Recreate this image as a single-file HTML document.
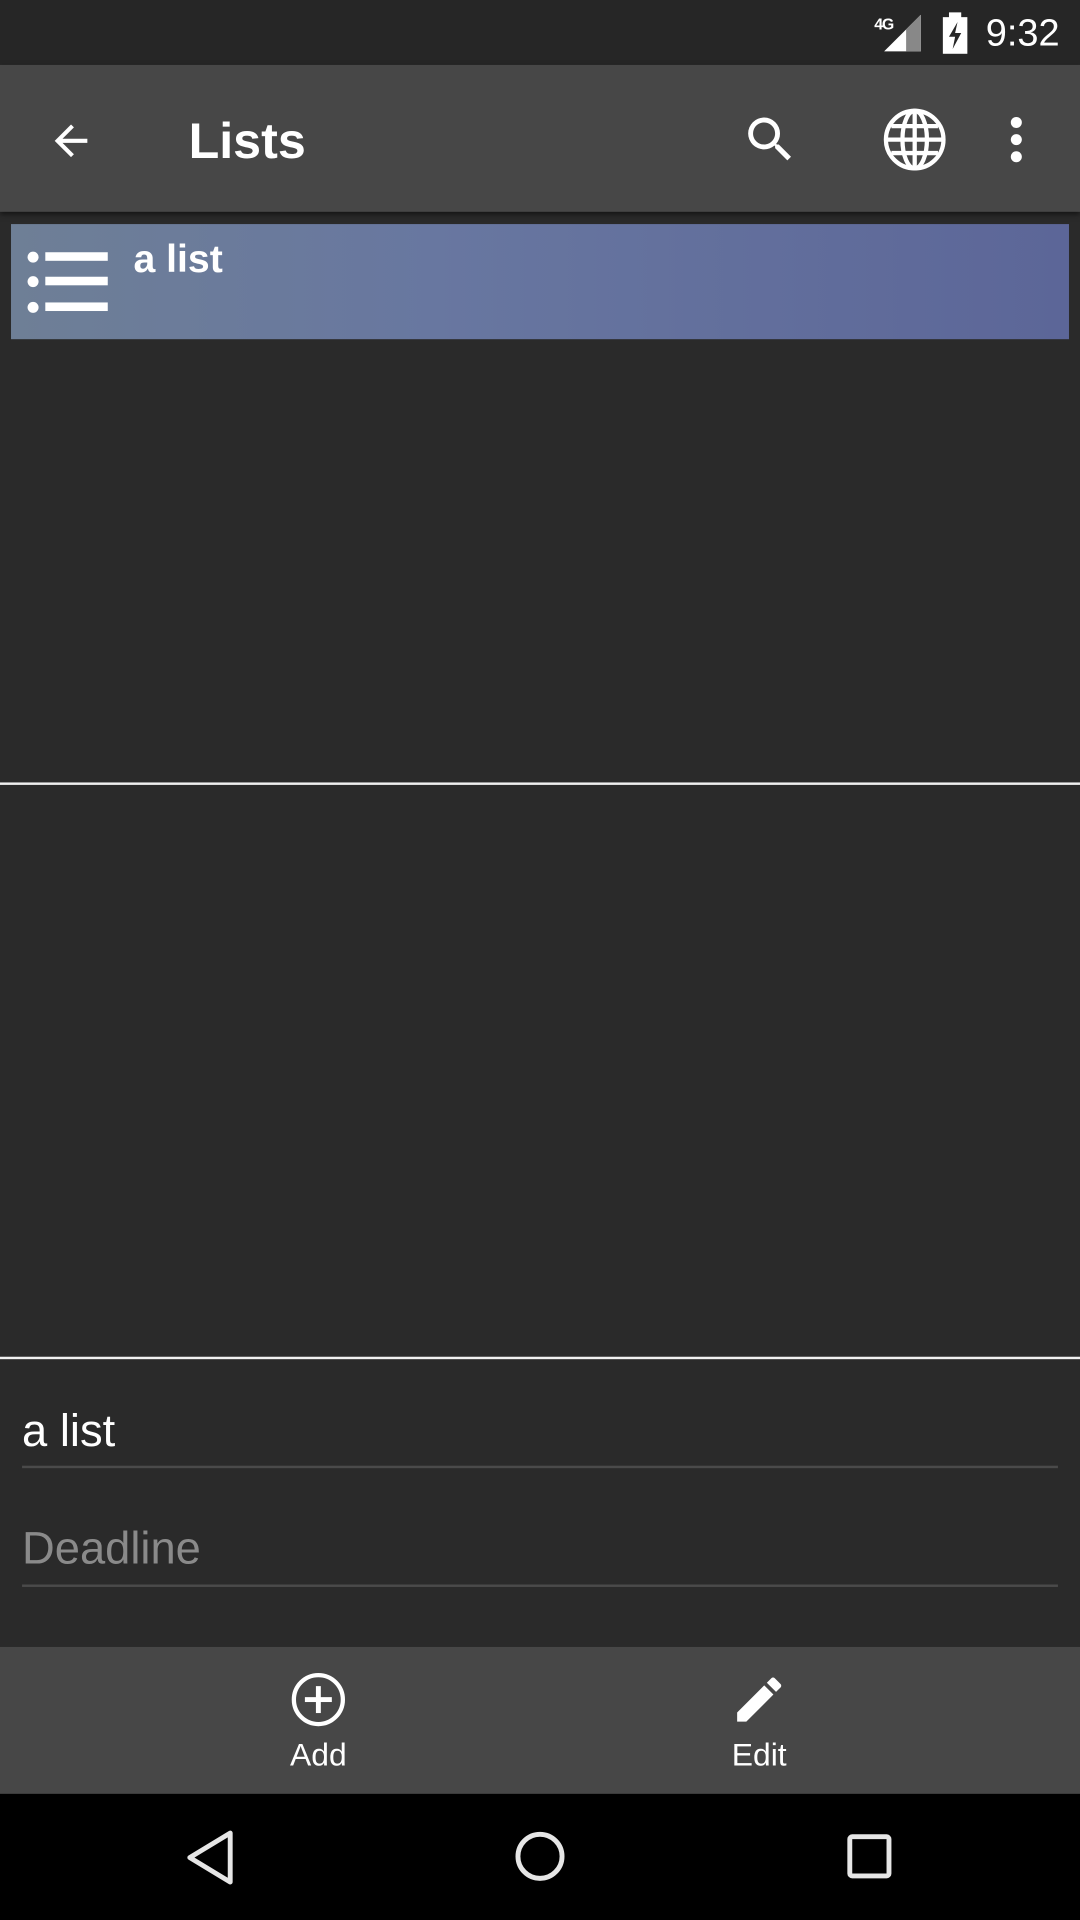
<!DOCTYPE html>
<html><head><meta charset="utf-8"><style>
html,body{margin:0;padding:0;background:#2a2a2a;width:1080px;height:1920px;overflow:hidden}
#w{position:absolute;left:0;top:0;width:882px;height:1568px;transform:scale(1.2244898);transform-origin:0 0;font-family:"Liberation Sans",sans-serif;background:#2a2a2a;color:#fff}
.a{position:absolute}
</style></head><body><div id="w">
<div class="a" style="left:0;top:0;width:882px;height:53px;background:#262626"></div>
<div class="a" style="left:714px;top:12px;font-size:13px;font-weight:bold;letter-spacing:-1px">4G</div>
<svg class="a" style="left:722px;top:12px" width="32" height="32"><polygon points="30,0 30,30 0,30" fill="#fff"/><polygon points="18,12 30,0 30,30 18,30" fill="#888"/></svg>
<svg class="a" style="left:768px;top:10px" width="24" height="34"><rect x="2" y="4" width="20" height="30" fill="#fff"/><rect x="7" y="0" width="10" height="5" fill="#fff"/><polygon points="14,8 7,20 12,20 10,30 17,17 12,17" fill="#262626"/></svg>
<div class="a" style="left:805px;top:9px;font-size:31px">9:32</div>
<div class="a" style="left:0;top:53px;width:882px;height:120px;background:#474747;box-shadow:0 2px 4px rgba(0,0,0,.5)"></div>
<svg class="a" style="left:38px;top:95px" width="40" height="40" viewBox="0 0 24 24"><path d="M20 11H7.83l5.59-5.59L12 4l-8 8 8 8 1.41-1.41L7.83 13H20v-2z" fill="#fff"/></svg>
<div class="a" style="left:154px;top:92px;font-size:41px;font-weight:bold">Lists</div>
<svg class="a" style="left:605px;top:90px" width="48" height="48" viewBox="0 0 24 24"><path d="M15.5 14h-.79l-.28-.27A6.47 6.47 0 0016 9.5 6.5 6.5 0 109.5 16c1.61 0 3.09-.59 4.23-1.57l.27.28v.79l5 4.99L20.49 19l-4.99-5zm-6 0C7.01 14 5 11.99 5 9.5S7.01 5 9.5 5 14 7.01 14 9.5 11.99 14 9.5 14z" fill="#fff"/></svg>
<svg class="a" style="left:720px;top:87px" width="54" height="54" viewBox="0 0 54 54" fill="none" stroke="#fff" stroke-width="3.5"><circle cx="27" cy="27" r="23.5"/><ellipse cx="27" cy="27" rx="10" ry="23.5"/><line x1="27" y1="3" x2="27" y2="51"/><line x1="4" y1="27" x2="50" y2="27"/><line x1="8" y1="16" x2="46" y2="16"/><line x1="8" y1="38" x2="46" y2="38"/></svg>
<svg class="a" style="left:822px;top:94px" width="16" height="40"><circle cx="8" cy="6" r="4.5" fill="#fff"/><circle cx="8" cy="20" r="4.5" fill="#fff"/><circle cx="8" cy="34" r="4.5" fill="#fff"/></svg>
<div class="a" style="left:9px;top:183px;width:864px;height:94px;background:linear-gradient(90deg,#6e7f96 0%,#6877a0 40%,#5c6698 100%)"></div>
<svg class="a" style="left:20px;top:200px" width="70" height="60"><g fill="#fff"><circle cx="7" cy="10" r="4.5"/><circle cx="7" cy="30" r="4.5"/><circle cx="7" cy="51" r="4.5"/><rect x="17" y="6" width="51" height="7"/><rect x="17" y="26" width="51" height="7"/><rect x="17" y="47" width="51" height="7"/></g></svg>
<div class="a" style="left:109px;top:193px;font-size:32px;font-weight:bold">a list</div>
<div class="a" style="left:0;top:639px;width:882px;height:2px;background:#f0f0f0"></div>
<div class="a" style="left:0;top:1108px;width:882px;height:2px;background:#f0f0f0"></div>
<div class="a" style="left:18px;top:1148px;font-size:37px">a list</div>
<div class="a" style="left:18px;top:1197px;width:846px;height:2px;background:#4a4a4a"></div>
<div class="a" style="left:18px;top:1244px;font-size:37px;color:#8a8a8a">Deadline</div>
<div class="a" style="left:18px;top:1294px;width:846px;height:2px;background:#4a4a4a"></div>
<div class="a" style="left:0;top:1345px;width:882px;height:120px;background:#474747"></div>
<svg class="a" style="left:236px;top:1364px" width="48" height="48"><circle cx="24" cy="24" r="20" fill="none" stroke="#fff" stroke-width="3.5"/><rect x="22" y="13" width="4" height="22" fill="#fff"/><rect x="13" y="22" width="22" height="4" fill="#fff"/></svg>
<div class="a" style="left:200px;top:1418px;width:120px;text-align:center;font-size:26px">Add</div>
<svg class="a" style="left:596px;top:1364px" width="48" height="48" viewBox="0 0 24 24"><path d="M3 17.25V21h3.75L17.81 9.94l-3.75-3.75L3 17.25zM20.71 7.04a1 1 0 000-1.41l-2.34-2.34a1 1 0 00-1.41 0l-1.83 1.83 3.75 3.75 1.83-1.83z" fill="#fff"/></svg>
<div class="a" style="left:560px;top:1418px;width:120px;text-align:center;font-size:26px">Edit</div>
<div class="a" style="left:0;top:1465px;width:882px;height:103px;background:#000"></div>
<svg class="a" style="left:150px;top:1493px" width="44" height="48"><polygon points="38,4 38,44 5,24" fill="none" stroke="#e6e6e6" stroke-width="4" stroke-linejoin="round"/></svg>
<svg class="a" style="left:418px;top:1493px" width="46" height="46"><circle cx="23" cy="23" r="18" fill="none" stroke="#e6e6e6" stroke-width="4"/></svg>
<svg class="a" style="left:690px;top:1496px" width="42" height="42"><rect x="4" y="4" width="32" height="32" rx="2" fill="none" stroke="#e6e6e6" stroke-width="4"/></svg>
</div></body></html>
